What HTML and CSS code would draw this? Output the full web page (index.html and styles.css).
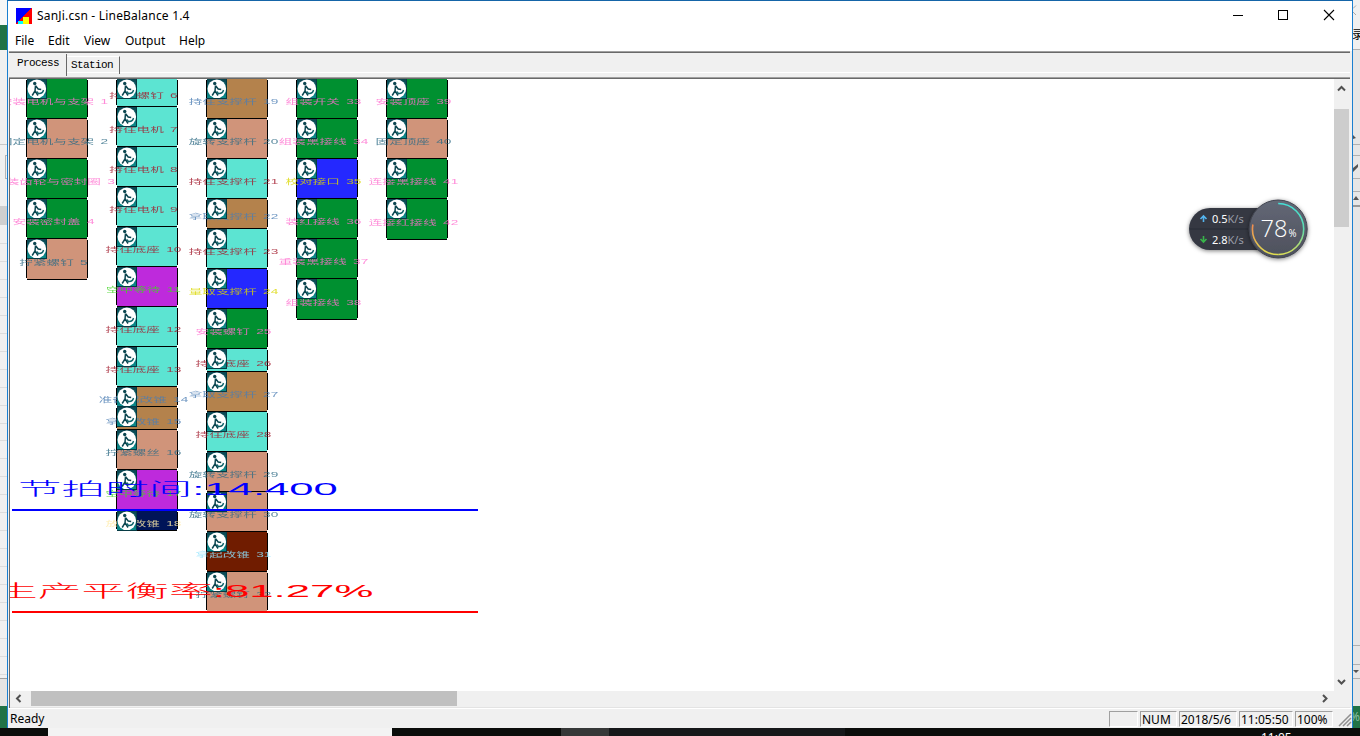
FILE: index.html
```html
<!DOCTYPE html>
<html lang="zh-CN">
<head>
<meta charset="utf-8">
<title>SanJi.csn - LineBalance 1.4</title>
<link rel="stylesheet" href="styles.css">
</head>
<body>
<div class="desktop">
  <svg class="edge" width="7" height="728" viewBox="0 0 7 728" shape-rendering="crispEdges">
    <rect width="7" height="728" fill="#f0f0f0"/>
    <rect width="7" height="25" fill="#f7f7f7"/>
    <rect y="25" width="7" height="25" fill="#217346"/>
    <path d="M0 144.5h7" stroke="#c8c8c8"/>
    <path d="M7 155.5H5.500v23H7" stroke="#b5b5b5" fill="none"/>
    <rect y="206" width="7" height="19" fill="#cfcfcf"/>
    <path d="M0 243.500h7M0 261.500h7M0 279.500h7M0 297.500h7M0 315.500h7M0 333.500h7M0 351.500h7M0 369.500h7M0 387.500h7M0 405.500h7M0 423.500h7M0 440.500h7M0 458.500h7M0 476.500h7M0 494.500h7M0 512.500h7M0 530.500h7M0 548.500h7M0 566.500h7M0 584.500h7M0 602.500h7M0 620.500h7M0 638.500h7M0 656.500h7M0 674.500h7" stroke="#dcdcdc"/>
    <path d="M0 678.500h7" stroke="#a0a0a0"/>
    <rect y="679" width="7" height="27" fill="#e4e4e4"/>
    <rect y="706" width="7" height="22" fill="#217346"/>
  </svg>

  <main class="window">
    <header class="titlebar">
      <svg class="app-icon" width="16" height="16" viewBox="0 0 16 16" shape-rendering="crispEdges">
        <rect width="16" height="16" fill="#f00"/>
        <path d="M0 0h15L0 15z" fill="#00f"/>
        <rect x="2" y="13" width="5" height="3" fill="#0ff"/>
        <rect x="7" y="9" width="6" height="7" fill="#ff0"/>
      </svg>
      <h1 class="title">SanJi.csn - LineBalance 1.4</h1>
      <svg class="controls" width="106" height="12" viewBox="0 0 106 12" fill="none" stroke="#000">
        <path d="M1 6.500h10M46.500 1.500h9v9h-9z" shape-rendering="crispEdges"/>
        <path d="M92 1l10 10M102 1L92 11" stroke-width="1.100"/>
      </svg>
    </header>
    <nav class="menu">
      <span class="m-file">File</span><span class="m-edit">Edit</span><span class="m-view">View</span><span class="m-output">Output</span><span class="m-help">Help</span>
    </nav>
    <div class="tabs">
      <span class="tab tab-active">Process</span><span class="tab tab-idle">Station</span>
    </div>
    <section class="client">
      <svg class="chart" id="chart" width="1324" height="612" viewBox="10 79 1324 612"></svg>
      <div class="vscroll">
        <svg width="16" height="30" viewBox="0 0 16 30"><path d="M4 11.500l3.500-3.500L11 11.500" fill="none" stroke="#505050" stroke-width="2"/></svg>
        <div class="vthumb"></div>
        <svg class="vdown" width="16" height="16" viewBox="0 0 16 16"><path d="M4 5l3.500 3.500L11 5" fill="none" stroke="#505050" stroke-width="2"/></svg>
      </div>
      <div class="hscroll">
        <svg width="21" height="16" viewBox="0 0 21 16"><path d="M10.500 4L7 7.500l3.500 3.500" fill="none" stroke="#505050" stroke-width="2"/></svg>
        <div class="hthumb"></div>
        <svg class="hright" width="16" height="16" viewBox="0 0 16 16"><path d="M6 4l3.500 3.500L6 11" fill="none" stroke="#505050" stroke-width="2"/></svg>
      </div>
    </section>
    <footer class="status">
      <span class="ready">Ready</span>
      <span class="pane p-blank"></span>
      <span class="pane p-num">NUM</span>
      <span class="pane p-date">2018/5/6</span>
      <span class="pane p-time">11:05:50</span>
      <span class="pane p-zoom">100%</span>
      <svg class="grip" width="14" height="14" viewBox="0 0 14 14"><path d="M1 13L13 1M5 13l8-8M9 13l4-4" stroke="#909090" stroke-width="1.500"/></svg>
    </footer>
  </main>

  <svg class="edge" width="7" height="728" viewBox="0 0 7 728">
    <rect width="7" height="728" fill="#e6e6e6"/>
    <rect width="7" height="50" fill="#f0f0f0"/>
    <path d="M0 8.500l3-3M0 12l3 3" stroke="#aaa"/>
    <text class="edge-text" x="-1" y="39">录</text>
    <path d="M0 49.500h7M0 144.500h7M0 155.500h7M0 178.500h7M0 191.500h7M0 645.500h7M0 664.500h7M0 678.500h7" stroke="#b0b0b0"/>
    <path d="M0 206h7" stroke="#999" stroke-width="2"/>
    <path d="M0 135l3 3-3 1zM0 168l5-4v3l-5 5zM0 200l3-4 3 4zM0 670h6l-3 3z" fill="#555"/>
    <rect y="706" width="7" height="22" fill="#217346"/>
    <text class="edge-percent" x="-3" y="721">%</text>
  </svg>

  <div class="taskbar">
    <span class="task-white"></span><span class="task-grey"></span><span class="task-dark"></span>
    <span class="clock">11:05</span>
  </div>

  <svg class="meter" width="132" height="76" viewBox="1183 191 132 76">
    <defs>
      <filter id="shade" x="-20%" y="-20%" width="140%" height="140%"><feDropShadow dx="0" dy="1" stdDeviation="2" flood-opacity=".5"/></filter>
      <linearGradient id="disc" x1="0" y1="0" x2="0" y2="1"><stop offset="0" stop-color="#636876"/><stop offset="1" stop-color="#4d505c"/></linearGradient>
      <linearGradient id="cool" x1="0" y1="0" x2="0" y2="1"><stop offset="0" stop-color="#44e0d6"/><stop offset=".5" stop-color="#5edcae"/><stop offset="1" stop-color="#d9de58"/></linearGradient>
      <linearGradient id="warm" x1="0" y1="0" x2="0" y2="1"><stop offset="0" stop-color="#f08a50"/><stop offset="1" stop-color="#dfdc4f"/></linearGradient>
    </defs>
    <rect x="1189" y="208" width="90" height="42" rx="21" fill="#343843" filter="url(#shade)"/>
    <path d="M1190 229h60" stroke="#292d36"/>
    <path d="M1203.500 222v-6M1200.500 219l3-3 3 3" fill="none" stroke="#54b4ee" stroke-width="1.600"/>
    <path d="M1203.500 236v6M1200.500 239l3 3 3-3" fill="none" stroke="#38b44a" stroke-width="1.600"/>
    <text class="rate" x="1212" y="223">0.5<tspan class="unit">K/s</tspan></text>
    <text class="rate" x="1212" y="244">2.8<tspan class="unit">K/s</tspan></text>
    <circle cx="1278.200" cy="229" r="29" fill="url(#disc)" stroke="#424550" filter="url(#shade)"/>
    <path d="M1278.200 203.500a25.500 25.500 0 0 1 0 51" fill="none" stroke="url(#cool)" stroke-width="1.600"/>
    <path d="M1278.200 254.500a25.500 25.500 0 0 1-25.300-30" fill="none" stroke="url(#warm)" stroke-width="1.600"/>
    <text class="load" x="1260.500" y="237" textLength="27" lengthAdjust="spacingAndGlyphs">78</text>
    <text class="load-unit" x="1288.500" y="237" textLength="8" lengthAdjust="spacingAndGlyphs">%</text>
  </svg>
</div>
<script src="chart.js"></script>
</body>
</html>
```
FILE: styles.css
```css
* { box-sizing: border-box; }

body {
  margin: 0;
  overflow: hidden;
  font: 12px "Noto Sans", "Noto Sans CJK SC", sans-serif;
  color: #000;
}

.desktop {
  position: relative;
  width: 1360px;
  height: 736px;
  display: grid;
  grid-template-columns: 7px 1346px 7px;
  grid-template-rows: 728px 8px;
}

.edge { display: block; }
.edge-text { font: 12px "Noto Sans CJK SC", sans-serif; }
.edge-percent { font: 12px "Noto Sans", sans-serif; fill: #8fc0a4; }

.window {
  display: flex;
  flex-direction: column;
  background: #f0f0f0;
  border: 1px solid #1a7fd0;
  border-top-color: #1565a8;
  border-bottom: 0;
}

.titlebar {
  flex: none;
  height: 30px;
  display: flex;
  align-items: center;
  background: #fff;
  padding: 0 14px 2px 8px;
}
.app-icon { margin-top: 1px; }
.title {
  margin: 0 auto 0 5px;
  font-size: 12px;
  font-weight: 400;
  letter-spacing: 0.2px;
  white-space: nowrap;
}
.controls { display: block; }

.menu {
  flex: none;
  height: 20px;
  display: flex;
  background: #fff;
  padding-left: 7px;
  line-height: 20px;
}
.menu span { flex: none; }
.m-file { width: 33px; }
.m-edit { width: 36px; }
.m-view { width: 41px; }
.m-output { width: 54px; }

.tabs {
  flex: none;
  height: 27px;
  margin: 0 2px 0 1px;
  display: flex;
  align-items: flex-start;
  border-top: 1px solid #a0a0a0;
  box-shadow: inset 0 1px #696969, inset 0 -5px #f0f0f0, inset 0 -6px #fff;
  font: 11px "Liberation Mono", monospace;
  letter-spacing: -0.6px;
}
.tab { border-right: 1px solid #696969; }
.tab-active {
  width: 58px;
  height: 22px;
  margin-top: 2px;
  padding: 3px 0 0 8px;
  background: #f0f0f0;
}
.tab-idle {
  width: 53px;
  height: 18px;
  margin-top: 4px;
  padding: 2px 0 0 4px;
  border-top: 1px solid #fff;
}

.client {
  flex: none;
  height: 630px;
  display: grid;
  grid-template-columns: 1324px 16px;
  grid-template-rows: 612px 16px;
  margin-right: 2px;
  border: solid #696969;
  border-width: 1px 0 0 1px;
  box-shadow: inset 0 -1px #e3e3e3, 0 -1px #a0a0a0;
  margin-left: 1px;
}
.chart { display: block; background: #fff; overflow: hidden; }
.vscroll { display: flex; flex-direction: column; }
.vthumb { width: 15px; height: 118px; background: #cdcdcd; }
.vdown { margin-top: auto; }
.hscroll { grid-column: 1 / 3; display: flex; }
.hthumb { width: 426px; height: 15px; background: #c0c0c0; }
.hright { margin-left: auto; margin-right: 17px; }

.status {
  flex: 1;
  display: flex;
  border-top: 1px solid #fff;
  line-height: 20px;
  white-space: nowrap;
}
.ready { margin: 0 auto 0 2px; }
.pane {
  height: 16px;
  margin: 2px 2px 0 0;
  padding-left: 1px;
  line-height: 15px;
  border: 1px solid #a0a0a0;
  border-right-color: #fff;
  border-bottom-color: #fff;
}
.p-blank { width: 29px; }
.p-num { width: 37px; }
.p-date { width: 58px; letter-spacing: -0.05px; }
.p-time { width: 54px; }
.p-zoom { width: 38px; }
.grip { margin: 4px 0 0 3px; }

.taskbar {
  grid-column: 1 / 4;
  display: flex;
  overflow: hidden;
  background: #0b0d0b;
}
.task-white { width: 344px; margin-left: 48px; background: #f3f3f3; }
.task-grey { width: 48px; margin-left: 169px; background: #363838; }
.task-dark { width: 236px; background: #16181a; }
.clock { margin-left: 416px; color: #fff; line-height: 20px; }

.meter { position: absolute; left: 1183px; top: 191px; }
.rate { font: 11px "Noto Sans", sans-serif; fill: #fff; }
.unit { fill: #9a9ea8; }
.load { font: 300 24px "Open Sans", sans-serif; fill: #fff; }
.load-unit { font: 11px "Open Sans", sans-serif; fill: #fff; }

.step-label {
  font: 6.8px "Liberation Sans", "Noto Sans CJK SC", sans-serif;
  word-spacing: 0.19em;
  text-anchor: middle;
  opacity: 0.8;
}
.summary {
  font: 300 17.3px "Liberation Sans", "Noto Sans CJK SC", sans-serif;
}
.takt { fill: #00f; }
.balance { fill: #f00; }
.takt-line { stroke: #00f; stroke-width: 2; }
.balance-line { stroke: #f00; stroke-width: 2; }
```
FILE: chart.js
```js
// Fill colours by motion type; labels use the inverted fill.
const FILLS = {
  assemble: [0, 144, 48],
  turn: [208, 148, 122],
  hold: [92, 228, 210],
  fetch: [180, 130, 76],
  wait: [190, 42, 220],
  measure: [36, 40, 255],
  release: [0, 20, 88],
  pick: [112, 28, 0]
};

// Each station: left edge and its steps as [bottom edge, type, label].
const STATIONS = [
  { x: 26, steps: [
    [118, 'assemble', '安装电机与支架 1'], [158, 'turn', '固定电机与支架 2'],
    [198, 'assemble', '安装齿轮与密封圈 3'], [238, 'assemble', '安装密封盖 4'],
    [279, 'turn', '拧紧螺钉 5']] },
  { x: 116, steps: [
    [106, 'hold', '持住螺钉 6'], [146, 'hold', '持住电机 7'], [186, 'hold', '持住电机 8'],
    [226, 'hold', '持住电机 9'], [266, 'hold', '持住底座 10'], [306, 'wait', '空中等待 11'],
    [346, 'hold', '持住底座 12'], [386, 'hold', '持住底座 13'], [406, 'fetch', '准备起改锥 14'],
    [429, 'fetch', '拿起改锥 15'], [469, 'turn', '拧紧螺丝 16'], [510, 'wait', '空中等待 17'],
    [530, 'release', '放下改锥 18']] },
  { x: 206, steps: [
    [118, 'fetch', '持住支撑杆 19'], [158, 'turn', '旋转支撑杆 20'], [198, 'hold', '持住支撑杆 21'],
    [228, 'fetch', '拿取支撑杆 22'], [268, 'hold', '持住支撑杆 23'], [308, 'measure', '量取支撑杆 24'],
    [348, 'assemble', '安装螺钉 25'], [371, 'hold', '持住底座 26'], [411, 'fetch', '拿取支撑杆 27'],
    [451, 'hold', '持住底座 28'], [491, 'turn', '旋转支撑杆 29'], [531, 'turn', '旋转支撑杆 30'],
    [571, 'pick', '拿起改锥 31'], [611, 'turn', '拧紧螺钉 32']] },
  { x: 296, steps: [
    [118, 'assemble', '组装开关 33'], [158, 'assemble', '组装黑接线 34'], [198, 'measure', '校对接口 35'],
    [238, 'assemble', '装红接线 36'], [278, 'assemble', '重装黑接线 37'], [319, 'assemble', '组装接线 38']] },
  { x: 386, steps: [
    [118, 'assemble', '安装顶座 39'], [158, 'turn', '固定顶座 40'],
    [198, 'assemble', '连接黑接线 41'], [239, 'assemble', '连接红接线 42']] }
];

const rgb = c => `rgb(${c.join(',')})`;

let out = `<defs>
  <linearGradient id="teal" x1="0" y1="0" x2="0" y2="1"><stop offset="0" stop-color="#0b4450"/><stop offset="1" stop-color="#0b8c8c"/></linearGradient>
  <g id="worker">
    <rect width="20" height="20" fill="#073b44"/>
    <rect width="19" height="19" fill="url(#teal)"/>
    <circle cx="9.800" cy="9.800" r="9.300" fill="#fff"/>
    <circle cx="7.700" cy="4.500" r="1.700" fill="#0c4650"/>
    <path d="M8.500 6.500L8 12M8.800 7l2.400 3 3 .5M8 11.800L5.200 16.500M8.200 12l2.800 4.500" fill="none" stroke="#0c4650" stroke-width="1.500"/>
    <path d="M16.500 11c-.5 2.600-2.300 3.800-5.300 3.500l-1-2" fill="none" stroke="#0c6268" stroke-width="1.400"/>
  </g></defs>`;

for (const { x, steps } of STATIONS) {
  let top = 78;
  for (const [bottom, type, label] of steps) {
    const fill = FILLS[type];
    const ink = fill.map(v => 255 - v);
    out += `<g><rect x="${x + 1}" y="${top + 1}" width="60" height="${bottom - top - 1}" fill="${rgb(fill)}"/>
      <path d="M${x + .5} ${top + 2}V${bottom - 1}M${x + 61.5} ${top + 2}V${bottom - 1}M${x + 1} ${bottom + .5}h60" stroke="#000" fill="none" shape-rendering="crispEdges"/>
      <text class="step-label" transform="translate(${x + 27.5} ${(top + bottom) / 2 + 6.4}) scale(2 1)" fill="${rgb(ink)}">${label}</text>
      <use href="#worker" x="${x + 1}" y="${top + 1}"/></g>`;
    top = bottom;
  }
}

out += `<path class="takt-line" d="M12 510H478"/><path class="balance-line" d="M12 612H478"/>
  <text class="summary takt" transform="translate(18 495) scale(2.520 1)">节拍时间:14.400</text>
  <text class="summary balance" transform="translate(-6 597) scale(2.530 1)">生产平衡率:81.27%</text>`;

document.getElementById('chart').innerHTML = out;
```
